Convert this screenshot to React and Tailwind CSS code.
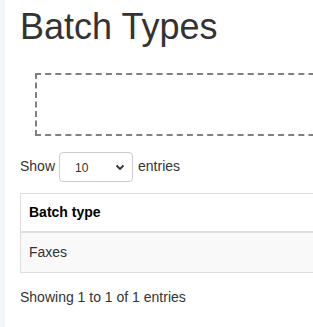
export default function App() {
  return (
    <div className="flex min-h-[327px] bg-white text-[14px] text-[#333]" style={{ fontFamily: '"Liberation Sans", Arial, sans-serif' }}>
      <div className="w-[5px] shrink-0 bg-[#f3f6f9]" />
      <div className="flex-1 min-w-0 pl-[15px] overflow-hidden">
        <h1 className="mt-[7px] text-[36px] leading-[1.1] font-normal text-[#333]">Batch Types</h1>
        <div className="mt-[26px] ml-[15px] h-[63px] w-[320px] border-2 border-dashed border-[#808080]" />
        <div className="mt-[16px] flex items-center h-[30px]">
          <span>Show</span>
          <div className="relative ml-[4px] mr-[5px] h-[30px] w-[74px] rounded-[4px] border border-[#ccc] bg-white">
            <span className="absolute left-[15px] top-[6px] text-[12px]">10</span>
            <svg className="absolute right-[7px] top-[11px]" width="10" height="7" viewBox="0 0 10 7">
              <path d="M1.5 1.5 L5 5 L8.5 1.5" fill="none" stroke="#333" strokeWidth="1.8" />
            </svg>
          </div>
          <span>entries</span>
        </div>
        <div className="mt-[11px] w-[320px] border border-[#ddd]">
          <div className="h-[37px] flex items-center px-[8px] font-bold text-[#000]">Batch type</div>
          <div className="h-[2px] bg-[#ddd]" />
          <div className="h-[39px] flex items-center px-[8px] bg-[#f9f9f9]">Faxes</div>
        </div>
        <div className="mt-[14px]">Showing 1 to 1 of 1 entries</div>
      </div>
    </div>
  );
}
